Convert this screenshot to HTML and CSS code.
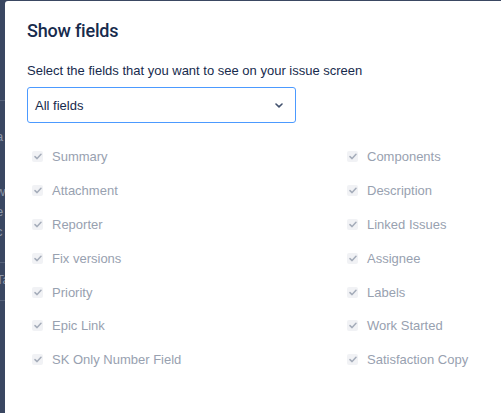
FILE: index.html
```html
<!DOCTYPE html>
<html>
<head>
<meta charset="utf-8">
<link rel="stylesheet" href="styles.css">
</head>
<body>
<div class="page">
  <div class="page-lines">
    <div class="pl-rule rule-top"></div>
    <div class="pl pl-a">a</div>
    <div class="pl pl-w">w</div>
    <div class="pl pl-e">e</div>
    <div class="pl pl-c">c</div>
    <div class="pl-rule rule-mid"></div>
    <div class="pl pl-t">Ta</div>
    <div class="pl-rule rule-low"></div>
  </div>
</div>
<div class="modal">
  <h1 class="title">Show fields</h1>
  <p class="hint">Select the fields that you want to see on your issue screen</p>
  <div class="select">
    <span class="select-value">All fields</span>
    <svg class="chevron" width="8" height="5" viewBox="0 0 8 5"><path d="M1 1 L4 3.8 L7 1" fill="none" stroke="#42526E" stroke-width="1.6" stroke-linecap="round" stroke-linejoin="round"/></svg>
  </div>
  <div class="fields">
    <label class="field"><span class="box"><svg width="8" height="7" viewBox="0 0 8 7"><path d="M1 3.6 L3.1 5.6 L7 1.3" fill="none" stroke="#A5ADBA" stroke-width="1.5" stroke-linecap="round" stroke-linejoin="round"/></svg></span><span class="label">Summary</span></label>
    <label class="field"><span class="box"><svg width="8" height="7" viewBox="0 0 8 7"><path d="M1 3.6 L3.1 5.6 L7 1.3" fill="none" stroke="#A5ADBA" stroke-width="1.5" stroke-linecap="round" stroke-linejoin="round"/></svg></span><span class="label">Components</span></label>
    <label class="field"><span class="box"><svg width="8" height="7" viewBox="0 0 8 7"><path d="M1 3.6 L3.1 5.6 L7 1.3" fill="none" stroke="#A5ADBA" stroke-width="1.5" stroke-linecap="round" stroke-linejoin="round"/></svg></span><span class="label">Attachment</span></label>
    <label class="field"><span class="box"><svg width="8" height="7" viewBox="0 0 8 7"><path d="M1 3.6 L3.1 5.6 L7 1.3" fill="none" stroke="#A5ADBA" stroke-width="1.5" stroke-linecap="round" stroke-linejoin="round"/></svg></span><span class="label">Description</span></label>
    <label class="field"><span class="box"><svg width="8" height="7" viewBox="0 0 8 7"><path d="M1 3.6 L3.1 5.6 L7 1.3" fill="none" stroke="#A5ADBA" stroke-width="1.5" stroke-linecap="round" stroke-linejoin="round"/></svg></span><span class="label">Reporter</span></label>
    <label class="field"><span class="box"><svg width="8" height="7" viewBox="0 0 8 7"><path d="M1 3.6 L3.1 5.6 L7 1.3" fill="none" stroke="#A5ADBA" stroke-width="1.5" stroke-linecap="round" stroke-linejoin="round"/></svg></span><span class="label">Linked Issues</span></label>
    <label class="field"><span class="box"><svg width="8" height="7" viewBox="0 0 8 7"><path d="M1 3.6 L3.1 5.6 L7 1.3" fill="none" stroke="#A5ADBA" stroke-width="1.5" stroke-linecap="round" stroke-linejoin="round"/></svg></span><span class="label">Fix versions</span></label>
    <label class="field"><span class="box"><svg width="8" height="7" viewBox="0 0 8 7"><path d="M1 3.6 L3.1 5.6 L7 1.3" fill="none" stroke="#A5ADBA" stroke-width="1.5" stroke-linecap="round" stroke-linejoin="round"/></svg></span><span class="label">Assignee</span></label>
    <label class="field"><span class="box"><svg width="8" height="7" viewBox="0 0 8 7"><path d="M1 3.6 L3.1 5.6 L7 1.3" fill="none" stroke="#A5ADBA" stroke-width="1.5" stroke-linecap="round" stroke-linejoin="round"/></svg></span><span class="label">Priority</span></label>
    <label class="field"><span class="box"><svg width="8" height="7" viewBox="0 0 8 7"><path d="M1 3.6 L3.1 5.6 L7 1.3" fill="none" stroke="#A5ADBA" stroke-width="1.5" stroke-linecap="round" stroke-linejoin="round"/></svg></span><span class="label">Labels</span></label>
    <label class="field"><span class="box"><svg width="8" height="7" viewBox="0 0 8 7"><path d="M1 3.6 L3.1 5.6 L7 1.3" fill="none" stroke="#A5ADBA" stroke-width="1.5" stroke-linecap="round" stroke-linejoin="round"/></svg></span><span class="label">Epic Link</span></label>
    <label class="field"><span class="box"><svg width="8" height="7" viewBox="0 0 8 7"><path d="M1 3.6 L3.1 5.6 L7 1.3" fill="none" stroke="#A5ADBA" stroke-width="1.5" stroke-linecap="round" stroke-linejoin="round"/></svg></span><span class="label">Work Started</span></label>
    <label class="field"><span class="box"><svg width="8" height="7" viewBox="0 0 8 7"><path d="M1 3.6 L3.1 5.6 L7 1.3" fill="none" stroke="#A5ADBA" stroke-width="1.5" stroke-linecap="round" stroke-linejoin="round"/></svg></span><span class="label">SK Only Number Field</span></label>
    <label class="field"><span class="box"><svg width="8" height="7" viewBox="0 0 8 7"><path d="M1 3.6 L3.1 5.6 L7 1.3" fill="none" stroke="#A5ADBA" stroke-width="1.5" stroke-linecap="round" stroke-linejoin="round"/></svg></span><span class="label">Satisfaction Copy</span></label>
  </div>
</div>
</body>
</html>
```
FILE: styles.css
```css
html, body {
  margin: 0;
  padding: 0;
  width: 501px;
  height: 413px;
  overflow: hidden;
  background: #3a4762;
  font-family: "Liberation Sans", Arial, sans-serif;
}

.page {
  position: relative;
  width: 501px;
  height: 413px;
}

.page-lines {
  display: flex;
  flex-direction: column;
  padding-top: 100px;
  margin-left: -4px;
  color: #8c96a8;
  font-size: 13px;
}

.pl {
  height: 20px;
  line-height: 20px;
}

.pl-a { margin-top: 26px; }
.pl-w { margin-top: 35px; }
.pl-rule {
  height: 1px;
  width: 12px;
  background: #56627a;
}
.rule-mid { margin-top: 20px; }
.pl-t { margin-top: 7px; }
.rule-low { margin-top: 10px; }

.modal {
  position: absolute;
  left: 5px;
  top: 1px;
  width: 620px;
  height: 440px;
  background: #ffffff;
  border-radius: 3px;
  box-sizing: border-box;
  padding: 18px 22px;
}

.title {
  margin: 0;
  font-family: Roboto, "Liberation Sans", sans-serif;
  font-size: 18px;
  font-weight: 500;
  letter-spacing: -0.2px;
  line-height: 24px;
  color: #172B4D;
}

.hint {
  margin: 18px 0 0;
  font-size: 13px;
  line-height: 20px;
  color: #172B4D;
}

.select {
  margin-top: 6px;
  width: 269px;
  height: 36px;
  box-sizing: border-box;
  border: 1px solid #4C9AFF;
  border-radius: 3px;
  display: flex;
  align-items: center;
  justify-content: space-between;
  padding: 0 12px 0 7px;
  color: #172B4D;
  font-size: 13px;
}

.chevron {
  display: block;
}

.fields {
  margin-top: 17px;
  display: grid;
  grid-template-columns: 315px 315px;
  grid-auto-rows: 33.8px;
}

.field {
  display: flex;
  align-items: center;
  padding-left: 5px;
}

.box {
  width: 11px;
  height: 11px;
  border-radius: 2px;
  background: #F1F2F5;
  display: flex;
  align-items: center;
  justify-content: center;
  margin-right: 9px;
}

.box svg {
  display: block;
}

.label {
  font-size: 13px;
  color: #98A1B0;
}
```
